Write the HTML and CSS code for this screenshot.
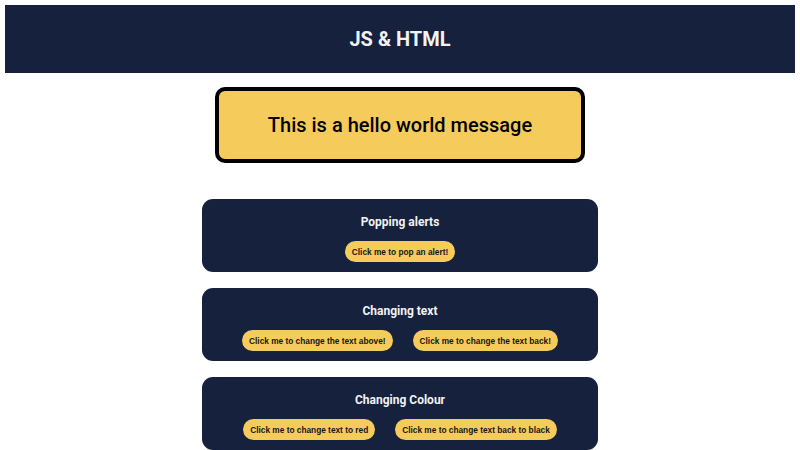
FILE: index.html
```html
<!DOCTYPE html>
<html lang="en">
<head>
<meta charset="utf-8">
<title>JS &amp; HTML</title>
<link rel="stylesheet" href="styles.css">
</head>
<body>
<header class="top">
  <h1 class="top-title">JS &amp; HTML</h1>
</header>
<main class="main">
  <div class="message"><p class="message-text">This is a hello world message</p></div>
  <section class="card">
    <h2 class="card-title">Popping alerts</h2>
    <div class="row"><button class="btn">Click me to pop an alert!</button></div>
  </section>
  <section class="card">
    <h2 class="card-title">Changing text</h2>
    <div class="row"><button class="btn">Click me to change the text above!</button><button class="btn">Click me to change the text back!</button></div>
  </section>
  <section class="card">
    <h2 class="card-title">Changing Colour</h2>
    <div class="row"><button class="btn">Click me to change text to red</button><button class="btn">Click me to change text back to black</button></div>
  </section>
</main>
</body>
</html>
```
FILE: styles.css
```css
* { box-sizing: border-box; }
html, body { background: #ffffff; }
body {
  margin: 5px;
  font-family: Roboto, "Liberation Sans", sans-serif;
}
.top {
  background: #15213d;
  height: 68px;
  display: flex;
  align-items: center;
  justify-content: center;
}
.top-title {
  margin: 0;
  color: #f2f2f2;
  font-size: 20px;
  font-weight: 700;
}
.main {
  display: flex;
  flex-direction: column;
  align-items: center;
}
.message {
  margin-top: 14px;
  width: 370px;
  height: 76px;
  border: 4px solid #000;
  border-radius: 10px;
  background: #f5cb5c;
  display: flex;
  align-items: center;
  justify-content: center;
}
.message-text {
  margin: 0;
  font-size: 20px;
  font-weight: 500;
  color: #000;
}
.card {
  width: 396px;
  height: 73px;
  margin-top: 16px;
  background: #15213d;
  border-radius: 11px;
  padding-top: 15px;
  display: flex;
  flex-direction: column;
  align-items: center;
}
.message + .card { margin-top: 36px; }
.card-title {
  margin: 0;
  color: #f2f2f2;
  font-size: 12px;
  font-weight: 700;
  line-height: 16px;
}
.row {
  margin-top: 11px;
  display: flex;
  gap: 20px;
  justify-content: center;
}
.btn {
  height: 21px;
  padding: 0 7px;
  border: none;
  border-radius: 11px;
  background: #f5cb5c;
  color: #161616;
  font-family: "Liberation Sans", Arial, sans-serif;
  font-weight: 700;
  font-size: 8.3px;
}
```
